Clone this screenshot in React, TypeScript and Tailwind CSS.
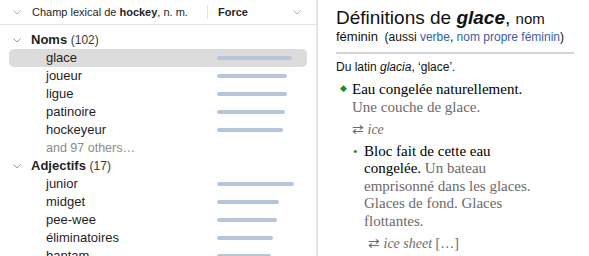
const NOUNS = [
  { word: "glace", force: 75 },
  { word: "joueur", force: 70 },
  { word: "ligue", force: 70 },
  { word: "patinoire", force: 68 },
  { word: "hockeyeur", force: 66 },
];

const ADJECTIVES = [
  { word: "junior", force: 77 },
  { word: "midget", force: 62 },
  { word: "pee-wee", force: 60 },
  { word: "éliminatoires", force: 56 },
  { word: "bantam", force: 54 },
];

const Chevron = ({ className }: { className?: string }) => (
  <svg className={className} width="8" height="5" viewBox="0 0 8 5" fill="none">
    <path d="M0.5 0.5 L4 4 L7.5 0.5" stroke="currentColor" strokeWidth="1" />
  </svg>
);

const WordRow = ({
  word,
  force,
  selected,
}: {
  word: string;
  force: number;
  selected?: boolean;
}) => (
  <div
    className={`mx-[9px] h-[18px] flex items-center rounded-[5px] ${
      selected ? "bg-[#dcdcdc]" : ""
    }`}>
    <p className="w-[208px] pl-[37px] text-[13px] text-[#1f1f1f]">{word}</p>
    <div
      className="h-[4px] rounded-full bg-[#b6c4dc]"
      style={{ width: `${force}px` }}
    />
  </div>
);

const Section = ({
  title,
  count,
  children,
}: {
  title: string;
  count: number;
  children: React.ReactNode;
}) => (
  <div className="flex flex-col">
    <div className="h-[18px] flex items-center pl-[13px] gap-x-[10px]">
      <Chevron className="text-[#9a9a9a]" />
      <p className="text-[13px] text-[#1f1f1f]">
        <span className="font-bold">{title}</span>{" "}
        <span className="text-[12px] text-[#3a3a3a]">({count})</span>
      </p>
    </div>
    {children}
  </div>
);

const App = () => {
  return (
    <div className="h-screen w-full flex bg-white overflow-hidden font-['Liberation_Sans',Arial,sans-serif]">
      {/* lexical field */}
      <div className="w-[318px] shrink-0 flex flex-col border-r-2 border-[#e6e6e6]">
        <div className="h-[25px] shrink-0 flex items-center border-b border-[#e4e4e4] text-[11px] text-[#262626]">
          <Chevron className="ml-[13px] text-[#b0b0b0]" />
          <p className="ml-[11px] w-[175px]">
            Champ lexical de <span className="font-bold">hockey</span>, n. m.
          </p>
          <div className="h-[14px] w-px bg-[#e2e2e2]" />
          <p className="ml-[10px] w-[75px] font-bold">Force</p>
          <Chevron className="text-[#b0b0b0]" />
        </div>
        <div className="pt-[6px] flex flex-col">
          <Section title="Noms" count={102}>
            {NOUNS.map((n, i) => (
              <WordRow key={n.word} word={n.word} force={n.force} selected={i === 0} />
            ))}
            <p className="h-[18px] pl-[46px] flex items-center text-[12.5px] text-[#8c8c8c]">
              and 97 others…
            </p>
          </Section>
          <Section title="Adjectifs" count={17}>
            {ADJECTIVES.map((a) => (
              <WordRow key={a.word} word={a.word} force={a.force} />
            ))}
          </Section>
        </div>
      </div>

      {/* definitions */}
      <div className="flex-1 pl-[18px] pr-[15px] pt-[7px]">
        <p className="text-[19px] leading-[22px] text-[#111]">
          Définitions de <span className="font-bold italic">glace</span>,{" "}
          <span className="text-[15px]">nom</span>
        </p>
        <p className="text-[13px] leading-[14px] text-[#111]">
          féminin{" "}
          <span className="ml-[3px] text-[12px] leading-[14px]">
            (aussi <span className="text-[#3d5ca0]">verbe</span>,{" "}
            <span className="text-[#3d5ca0]">nom propre féminin</span>)
          </span>
        </p>
        <div className="mt-[8px] h-[2px] bg-[#d4d4d4]" />
        <p className="mt-[6px] text-[12px] leading-[14px] text-[#111]">
          Du latin <span className="italic">glacia</span>, ‘glace’.
        </p>
        <div className="mt-[7px] font-['Liberation_Serif',serif] text-[15px] leading-[17.5px]">
          <div className="flex">
            <span className="w-[16px] shrink-0 pl-[4px] text-[9px] leading-[14px] text-[#1e8a27]">◆</span>
            <div>
              <p className="text-black">Eau congelée naturellement.</p>
              <p className="text-[#6a6a6a]">Une couche de glace.</p>
              <p className="mt-[5px] text-[14px] text-[#6a6a6a]">
                ⇄ <span className="italic">ice</span>
              </p>
            </div>
          </div>
          <div className="flex mt-[4px] pl-[17px]">
            <span className="w-[11px] shrink-0 text-[13px] text-[#1e8a27]">•</span>
            <div>
              <p className="text-black">
                Bloc fait de cette eau
                <br />
                congelée. <span className="text-[#6a6a6a]">Un bateau</span>
              </p>
              <p className="text-[#6a6a6a]">
                emprisonné dans les glaces.
                <br />
                Glaces de fond. Glaces
                <br />
                flottantes.
              </p>
              <p className="mt-[5px] pl-[4px] text-[14px] text-[#6a6a6a]">
                ⇄ <span className="italic">ice sheet</span> […]
              </p>
            </div>
          </div>
        </div>
      </div>
    </div>
  );
};

export default App;
